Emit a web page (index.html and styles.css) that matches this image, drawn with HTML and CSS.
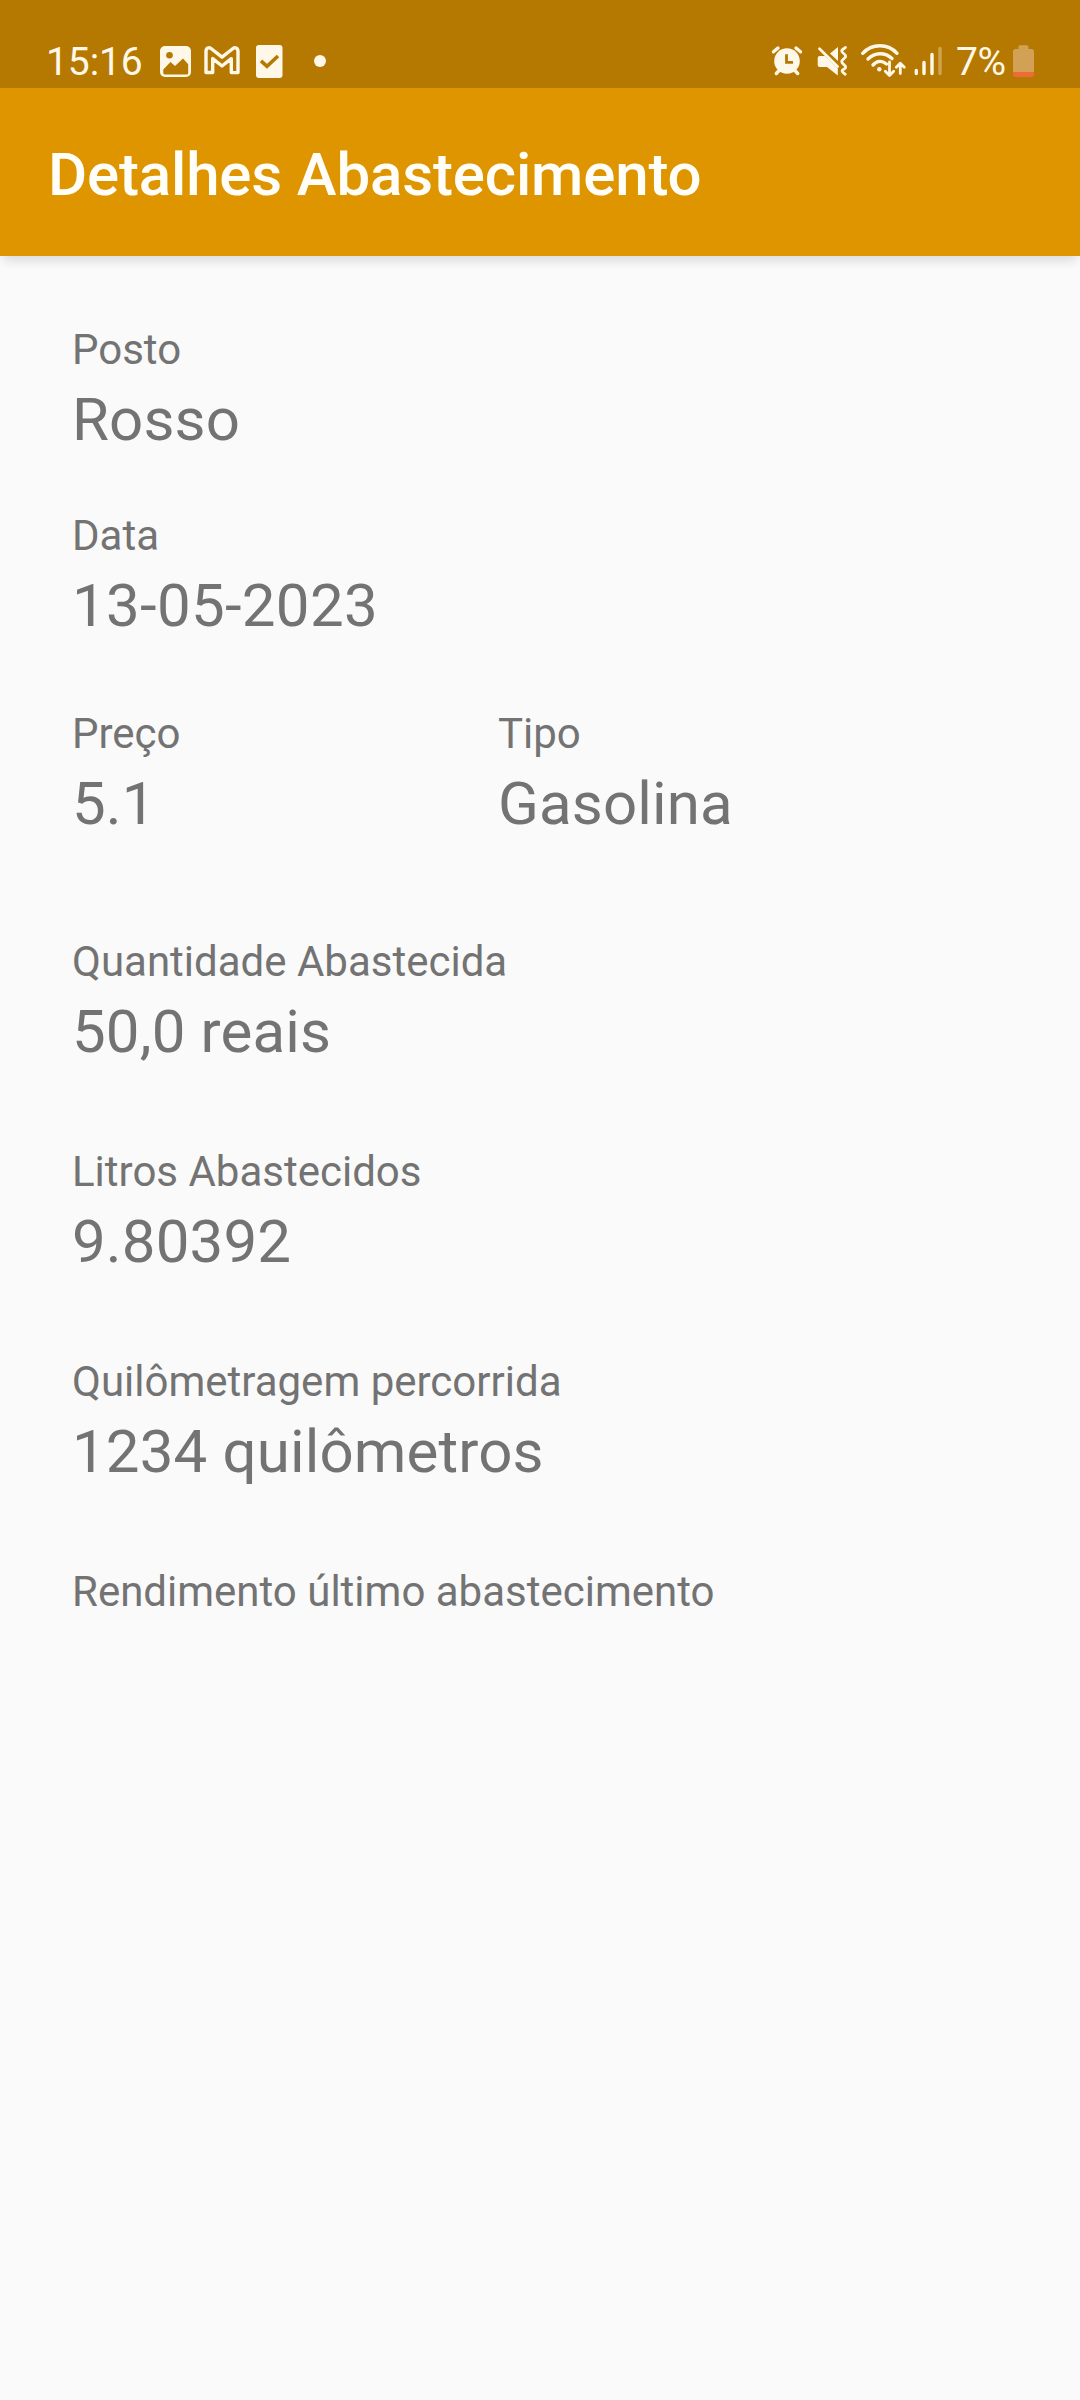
FILE: index.html
```html
<!DOCTYPE html>
<html lang="pt-BR">
<head>
<meta charset="utf-8">
<title>Detalhes Abastecimento</title>
<link rel="stylesheet" href="styles.css">
</head>
<body>
<header class="status">
  <div class="notifications">
    <span class="clock">15:16</span>
    <svg class="photo" width="31" height="40" viewBox="0 0 31 40"><rect y="6" width="31" height="31" rx="5" fill="currentColor"/><circle class="hole" cx="9.5" cy="15.3" r="3.3"/><path class="hole" d="M3.3 29.5 10.5 22l4.5 4 8-7.5 5.2 5.8V33q0 1.500-1.500 1.500H5q-1.700 0-1.700-1.500z"/></svg>
    <svg class="mail" width="36" height="40" viewBox="0 0 36 40"><path class="line" d="M2 32.500V11.500c0-3.700 3-4.500 5-3l11 8.700 11-8.700c2-1.500 5-.700 5 3v21.100H27.300V18.600L18 26l-9.300-7.400v13.900z"/></svg>
    <svg class="task" width="27" height="40" viewBox="0 0 27 40"><rect y="5" width="26.500" height="33" rx="3" fill="currentColor"/><path class="cut" d="M5 20.800 11 26.300 22 16"/></svg>
    <span class="dot"></span>
  </div>
  <div class="system">
    <svg class="alarm" width="30" height="40" viewBox="0 0 30 40"><circle cx="15" cy="21" r="12.800" fill="currentColor"/><path class="line" d="M1.500 11.800 6 8M28.500 11.800 24 8M4.300 33.500 8 29.500M25.700 33.500 22 29.500"/><path class="hand" d="M14.500 14.300V22.300H21"/></svg>
    <svg class="mute" width="31" height="40" viewBox="0 0 31 40"><path fill="currentColor" d="M.700 18Q.700 16 2.700 16H8L20.800 28.500V35.500L10 27H2.700Q.700 27 .700 25zM13 13.500 21 7V21z"/><path class="thin" d="M2.500 8.800 20.500 26.500M28.500 7.500c-5 3-4.500 4-1.800 6s2.700 3.300 0 5.300-2.700 3.500 0 5.500 2.700 3.500 0 5-1.700 3 1.500 5"/></svg>
    <svg class="wifi" width="45" height="40" viewBox="0 0 45 40"><path class="line" d="M1.700 13.300C11 3.200 27 3.200 36 13.300M7 19c7-7 17-7 24-.500M12 25c4-4.500 9-4.500 13.500-1"/><circle cx="18.300" cy="29.300" r="2.200" fill="currentColor"/><path class="thin" d="M28.500 22V35M24.300 31.200l4.200 4.200 4.200-4.200M39.300 33.500V23.500M35.300 27.300l4-4 4 4"/></svg>
    <svg class="signal" width="28" height="40" viewBox="0 0 28 40"><path class="line" d="M2.300 30.500V33.500M10 22.500V33.500M18 14.500V33.500"/><path class="line faded" d="M26 8.500V33.500"/></svg>
    <span class="percent">7%</span>
    <svg class="battery" width="21" height="40" viewBox="0 0 21 40"><path fill="#d2a155" d="M2.500 9H5.500V7q0-1.700 1.700-1.700h6.600q1.700 0 1.700 1.700v2h3q2.500 0 2.500 2.500V32H0V11.500Q0 9 2.500 9z"/><path fill="#ed6b35" d="M0 32H21v3q0 2-2 2H2q-2 0-2-2z"/></svg>
  </div>
</header>
<div class="appbar"><h1>Detalhes Abastecimento</h1></div>
<main class="details">
  <section class="field posto"><div class="label">Posto</div><div class="value">Rosso</div></section>
  <section class="field data"><div class="label">Data</div><div class="value">13-05-2023</div></section>
  <div class="pair">
    <section class="field"><div class="label">Preço</div><div class="value">5.1</div></section>
    <section class="field"><div class="label">Tipo</div><div class="value">Gasolina</div></section>
  </div>
  <section class="field"><div class="label">Quantidade Abastecida</div><div class="value">50,0 reais</div></section>
  <section class="field"><div class="label">Litros Abastecidos</div><div class="value">9.80392</div></section>
  <section class="field"><div class="label">Quilômetragem percorrida</div><div class="value">1234 quilômetros</div></section>
  <section class="field"><div class="label">Rendimento último abastecimento</div></section>
</main>
</body>
</html>
```

FILE: styles.css
```css
* { box-sizing: border-box; }
body { margin: 0; background: #fafafa; font-family: Roboto, sans-serif; color: #737373; min-height: 2400px; }

.status { height: 88px; background: #b57800; color: #fff8e8; padding: 40px 46px 0; display: flex; justify-content: space-between; font-size: 39px; line-height: 44px; }
.notifications, .system { display: flex; align-items: flex-start; }
.status svg { display: block; flex: none; overflow: visible; }
.clock { width: 114px; letter-spacing: -0.1px; }
.mail { margin-left: 13px; }
.task { margin-left: 16px; }
.dot { width: 12px; height: 12px; border-radius: 50%; background: currentColor; margin: 15px 0 0 31px; }
.mute { margin-left: 15px; }
.wifi { margin-left: 13px; }
.signal { margin-left: 8px; }
.percent { width: 57px; margin-left: 14px; letter-spacing: -0.5px; }
.hole { fill: #b57800; }
.line { fill: none; stroke: currentColor; stroke-width: 3.4; stroke-linecap: round; stroke-linejoin: round; }
.thin { fill: none; stroke: currentColor; stroke-width: 2.8; stroke-linecap: round; stroke-linejoin: round; }
.cut { fill: none; stroke: #b57800; stroke-width: 3.6; }
.hand { fill: none; stroke: #b57800; stroke-width: 2.8; }
.faded { opacity: .35; }

.appbar { height: 168px; background: #df9500; color: #fffef8; padding: 5px 48px 0; display: flex; align-items: center; box-shadow: 0 8px 10px -3px rgba(0, 0, 0, .12); }
h1 { margin: 0; font-size: 60px; font-weight: 500; letter-spacing: -0.15px; }

.details { padding: 66px 72px; }
.label { font-size: 42px; line-height: 56px; }
.value { font-size: 60px; line-height: 80px; padding-top: 2px; letter-spacing: 0.15px; }
.field { margin-bottom: 72px; }
.posto { margin-bottom: 48px; }
.data { margin-bottom: 60px; }
.data .value { letter-spacing: 0.3px; }
.pair { display: grid; grid-template-columns: 426px 1fr; margin-bottom: 90px; }
.pair .field { margin: 0; }
```
